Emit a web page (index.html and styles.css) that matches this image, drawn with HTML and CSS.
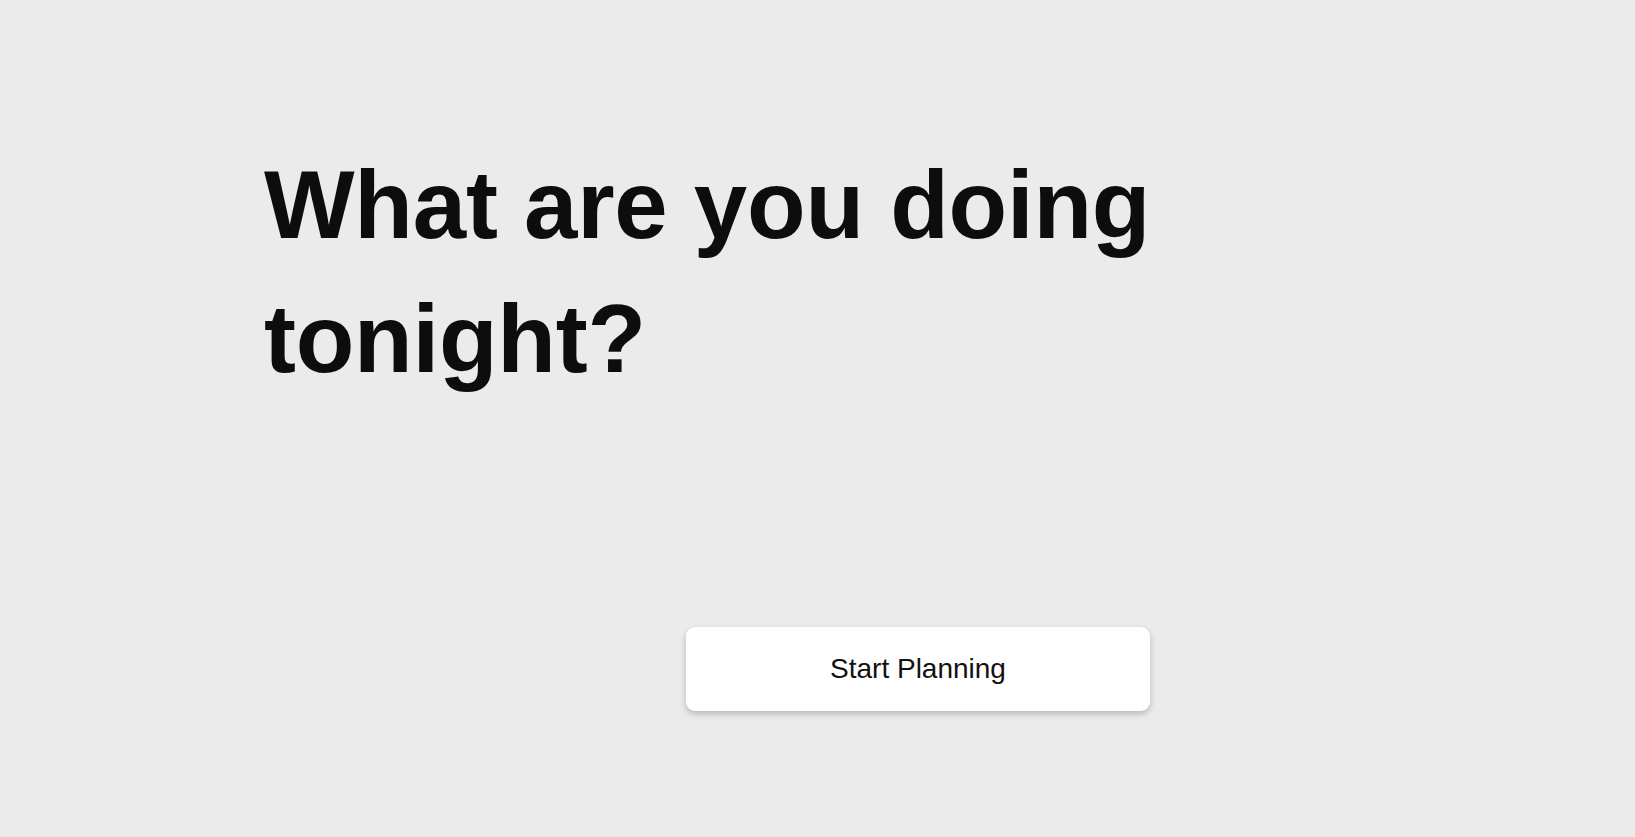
FILE: index.html
```html
<!DOCTYPE html>
<html lang="en">
<head>
<meta charset="utf-8">
<title>What are you doing tonight?</title>
<link rel="stylesheet" href="styles.css">
</head>
<body>
<main class="page">
  <section class="hero">
    <h1 class="title">What are you doing tonight?</h1>
    <div class="actions">
      <button class="start-btn" type="button">Start Planning</button>
    </div>
  </section>
</main>
</body>
</html>
```

FILE: styles.css
```css
html, body {
  margin: 0;
  padding: 0;
  height: 100%;
}
body {
  background: #ebebeb;
  font-family: "Liberation Sans", Arial, Helvetica, sans-serif;
  color: #0d0d0d;
}
.page {
  padding: 138px 264px 0 264px;
  box-sizing: border-box;
}
.hero {
  display: flex;
  flex-direction: column;
}
.title {
  margin: 0;
  font-size: 96px;
  line-height: 1.4;
  font-weight: 700;
  letter-spacing: -0.25px;
}
.actions {
  width: 886px;
  display: flex;
  justify-content: flex-end;
  margin-top: 220px;
}
.start-btn {
  width: 464px;
  height: 84px;
  border: none;
  border-radius: 9px;
  background: #ffffff;
  box-shadow: 0 3px 6px rgba(0, 0, 0, 0.22);
  font-family: "Liberation Sans", Arial, Helvetica, sans-serif;
  font-size: 28px;
  color: #111;
  cursor: pointer;
}
```
